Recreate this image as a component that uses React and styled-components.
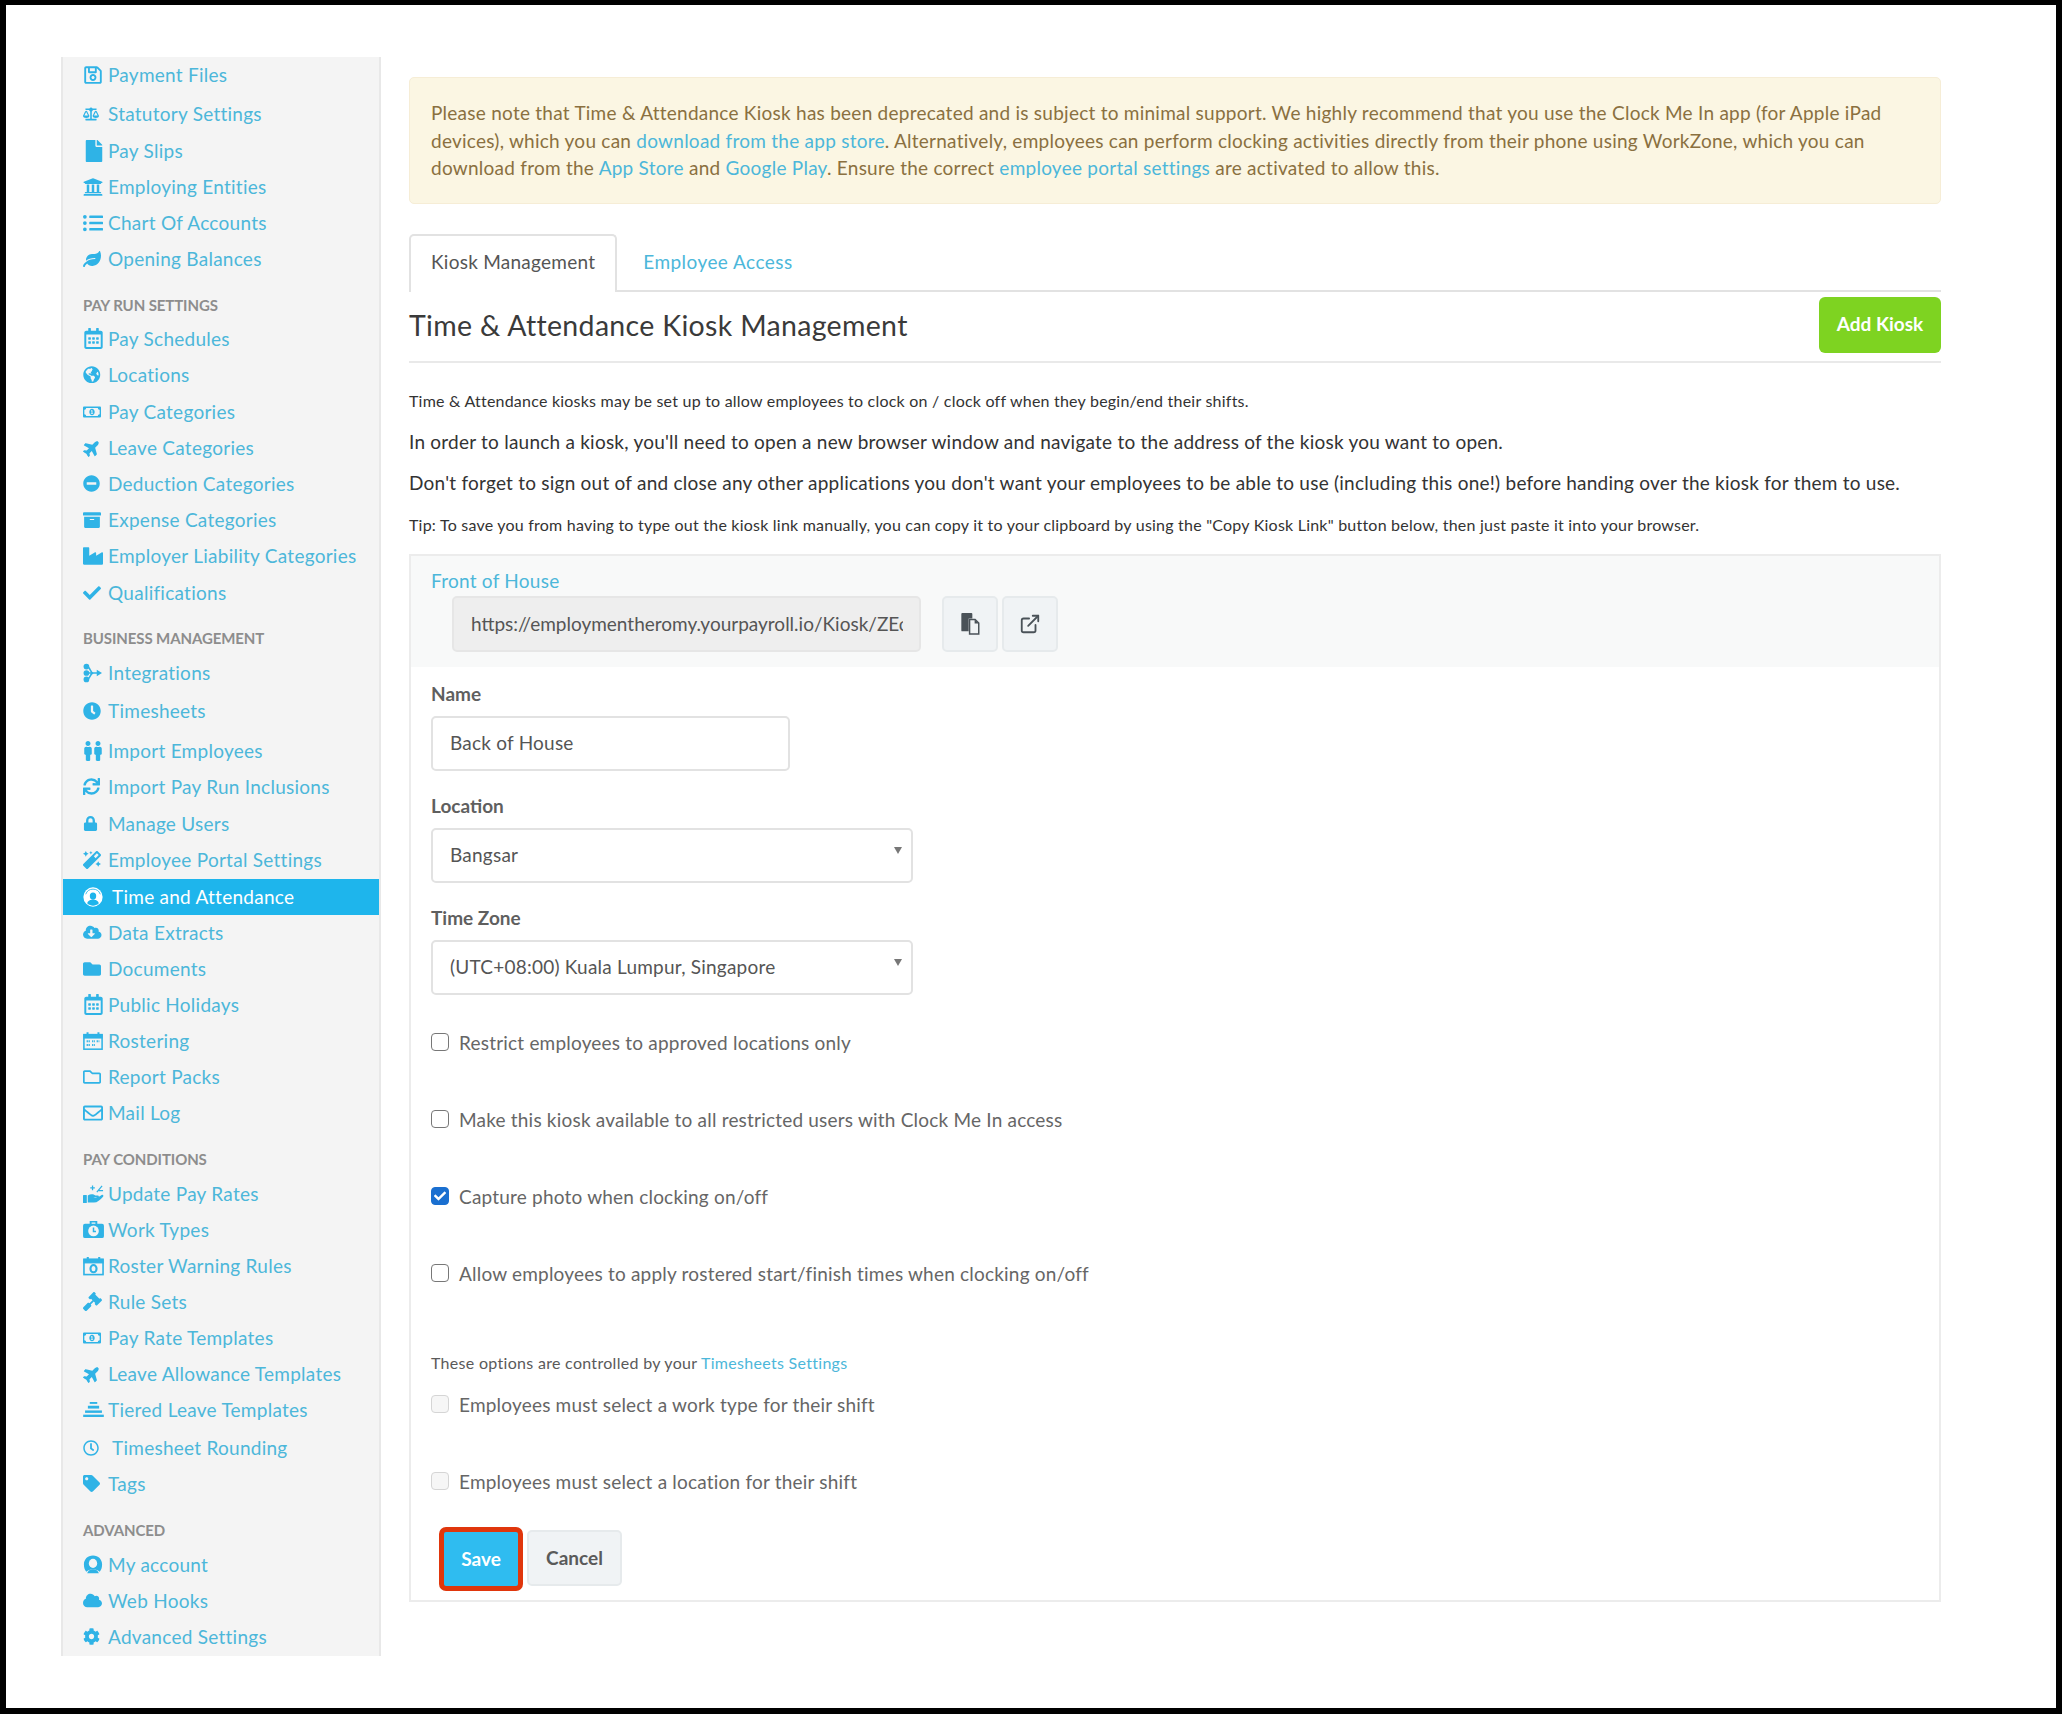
import React from "react";
import styled, { createGlobalStyle } from "styled-components";
import {
  FaRegSave, FaBalanceScale, FaFile, FaUniversity, FaListUl, FaLeaf, FaRegCalendarAlt,
  FaGlobeAmericas, FaRegMoneyBillAlt, FaPlane, FaMinusCircle, FaArchive, FaIndustry, FaCheck,
  FaClock, FaRegClock, FaSync, FaLock, FaMagic, FaCloudDownloadAlt, FaFolder,
  FaRegFolder, FaRegEnvelope, FaGavel, FaTag, FaCloud, FaCog, FaMale,
} from "react-icons/fa";
import { ExternalLink } from "lucide-react";

const blue = "#4cb7da";

const GlobalStyle = createGlobalStyle`
  html, body { margin: 0; padding: 0; background: #000; }
  body { font-family: "Lato", "Open Sans", sans-serif; }
  * { box-sizing: border-box; }
`;

function IntegrationIcon() {
  return (
    <svg viewBox="0 0 20 20" width="19" height="20" fill="currentColor">
      <circle cx="3.6" cy="3.2" r="3" />
      <circle cx="3.6" cy="10" r="3" />
      <circle cx="3.6" cy="16.8" r="3" />
      <path d="M4 3.2 C8 3.2 7 10 11 10 C7 10 8 16.8 4 16.8 M4 10 H15" stroke="currentColor" strokeWidth="1.7" fill="none" />
      <path d="M14.5 6.6 L20 10 L14.5 13.4 Z" />
    </svg>
  );
}

function HandSparkIcon() {
  return (
    <svg viewBox="0 0 22 20" width="21" height="20" fill="currentColor">
      <rect x="0" y="11" width="4" height="8.4" rx="0.6" />
      <path d="M5 11.5 C8 9.5 11 10 13 11.5 H15.5 C17 11.5 17 13.5 15.5 13.5 H11 C13 14.5 16 13.5 19.5 11 C21 10.2 22 11.8 21 12.8 C18 16 15 19 11.5 19 H5 Z" />
      <path d="M10 6 V1 M7.6 3.5 H12.4 M14.5 8 L20 1.5 M16.5 6.5 H21" stroke="currentColor" strokeWidth="1.3" fill="none" />
    </svg>
  );
}

function BriefClockIcon() {
  return (
    <svg viewBox="0 0 22 20" width="21" height="19">
      <path fill="currentColor" d="M7 1 H15 V4 H20 A2 2 0 0 1 22 6 V17 A2 2 0 0 1 20 19 H2 A2 2 0 0 1 0 17 V6 A2 2 0 0 1 2 4 H7 Z M9 2.6 V4 H13 V2.6 Z" fillRule="evenodd" />
      <circle cx="11" cy="11.5" r="5.6" fill="#f4f4f4" />
      <path d="M11 8 V12 H13.6" stroke="currentColor" strokeWidth="1.6" fill="none" />
    </svg>
  );
}

function RosterWarnIcon() {
  return (
    <svg viewBox="0 0 22 20" width="21" height="20" fill="none" stroke="currentColor">
      <rect x="1" y="3" width="20" height="16" strokeWidth="1.7" />
      <rect x="1" y="3" width="20" height="3.8" fill="currentColor" />
      <path d="M5 0.5 V4 M17 0.5 V4" strokeWidth="2.2" />
      <ellipse cx="11" cy="12.8" rx="3.2" ry="3.8" strokeWidth="2.2" />
    </svg>
  );
}

function RosterIcon() {
  return (
    <svg viewBox="0 0 22 20" width="20" height="20" fill="none" stroke="currentColor">
      <rect x="1" y="3" width="20" height="16" strokeWidth="1.7" />
      <rect x="1" y="3" width="20" height="3.8" fill="currentColor" />
      <path d="M5 0.5 V4 M17 0.5 V4" strokeWidth="2.2" />
      <path d="M4 10.4 H8 M10 10.4 H13 M15 10.4 H18 M4 14.4 H8 M10 14.4 H13" strokeWidth="2.2" strokeDasharray="1.4 0.7" />
    </svg>
  );
}

function TierIcon() {
  return (
    <svg viewBox="0 0 22 16" width="21" height="15" fill="currentColor">
      <rect x="7" y="0" width="8" height="2" />
      <rect x="5" y="4" width="12" height="3" />
      <rect x="2" y="9" width="18" height="2.6" />
      <rect x="0" y="13.5" width="22" height="2.5" />
    </svg>
  );
}

function AccountIcon() {
  return (
    <svg viewBox="0 0 22 20" width="20" height="19">
      <path fill="currentColor" d="M11 0.2 C17 0.2 21 4.5 21 10 C21 13.5 20 16 18.4 18 C16.5 15.8 14 15.4 11 15.4 C8 15.4 5.5 15.8 3.6 18 C2 16 1 13.5 1 10 C1 4.5 5 0.2 11 0.2 Z" />
      <ellipse cx="11" cy="8.8" rx="4.6" ry="5" fill="#f4f4f4" />
      <path fill="currentColor" d="M4.6 19.6 C5.4 16.6 8 15.2 11 15.2 C14 15.2 16.6 16.6 17.4 19.6 Z" />
    </svg>
  );
}

function AttendanceIcon() {
  return (
    <svg viewBox="0 0 22 22" width="20" height="20">
      <circle cx="11" cy="11" r="10.6" fill="#fff" />
      <path d="M3 8 A8.5 8.5 0 0 1 19 8" stroke="#1eb5ec" strokeWidth="0.9" fill="none" />
      <ellipse cx="11" cy="10" rx="3.5" ry="4" fill="#1eb5ec" />
      <path d="M4.6 18 C5.5 14.6 8 14 11 14 C14 14 16.5 14.6 17.4 18 C15.5 20 13 20.6 11 20.6 C9 20.6 6.5 20 4.6 18 Z" fill="#1eb5ec" />
    </svg>
  );
}

function PasteIcon() {
  return (
    <svg viewBox="0 0 20 24" width="19" height="22">
      <path fill="#4a5258" d="M1 0 H11 A1 1 0 0 1 12 1 V6 H8 V20 H1 A1 1 0 0 1 0 19 V1 A1 1 0 0 1 1 0 Z" />
      <path fill="#f0f3f5" stroke="#4a5258" strokeWidth="1.6" d="M9 7 H15 L19 11 V23 H9 Z" />
      <path fill="#4a5258" d="M14.5 7 V11.5 H19 Z" />
    </svg>
  );
}

function PeopleIcon() {
  return (
    <Pair>
      <FaMale />
      <FaMale />
    </Pair>
  );
}

const Pair = styled.span`
  display: inline-flex;
  & > svg { width: 10px; height: 20px; }
`;

const Plane = styled(FaPlane)`
  transform: rotate(-45deg);
`;

const Frame = styled.div`
  width: 2062px;
  height: 1714px;
  border-style: solid;
  border-color: #000;
  border-width: 5px 6px 6px 6px;
  background: #fff;
  display: flex;
  align-items: flex-start;
  padding: 52px 0 0 55px;
  overflow: hidden;
`;

const Sidebar = styled.nav`
  width: 320px;
  height: 1599px;
  flex: none;
  background: #f4f4f4;
  border-left: 2px solid #e8e8e8;
  border-right: 2px solid #e8e8e8;
`;

const Row = styled.a`
  display: flex;
  align-items: center;
  height: 36px;
  margin-top: ${(p) => p.$gap || 0}px;
  padding-left: 20px;
  padding-bottom: 1px;
  color: ${(p) => (p.$active ? "#fff" : blue)};
  background: ${(p) => (p.$active ? "#1eb5ec" : "transparent")};
  font-size: 19px;
  letter-spacing: 0.26px;
`;

const IconSlot = styled.span`
  width: ${(p) => (p.$wide ? 29 : 25)}px;
  flex: none;
  display: inline-flex;
  align-items: center;
  color: ${(p) => (p.$active ? "#fff" : "#2fb3e6")};
  font-size: ${(p) => p.$size || 18}px;
`;

const SectionHead = styled.div`
  height: 26px;
  margin-top: ${(p) => p.$gap || 0}px;
  padding-left: 20px;
  display: flex;
  align-items: center;
  color: #8d8d8d;
  font-size: 15px;
  font-weight: 700;
  letter-spacing: -0.1px;
`;

const nav = [
  { t: "Payment Files", i: <FaRegSave />, s: 20 },
  { t: "Statutory Settings", i: <FaBalanceScale />, g: 3, s: 16 },
  { t: "Pay Slips", i: <FaFile />, g: 1, s: 22 },
  { t: "Employing Entities", i: <FaUniversity />, s: 20 },
  { t: "Chart Of Accounts", i: <FaListUl />, s: 20 },
  { t: "Opening Balances", i: <FaLeaf />, s: 18 },
  { h: "PAY RUN SETTINGS", g: 15 },
  { t: "Pay Schedules", i: <FaRegCalendarAlt />, g: 3, s: 21 },
  { t: "Locations", i: <FaGlobeAmericas />, s: 17.5 },
  { t: "Pay Categories", i: <FaRegMoneyBillAlt />, g: 1, s: 18 },
  { t: "Leave Categories", i: <Plane />, s: 18 },
  { t: "Deduction Categories", i: <FaMinusCircle />, s: 17 },
  { t: "Expense Categories", i: <FaArchive />, s: 18 },
  { t: "Employer Liability Categories", i: <FaIndustry />, s: 20 },
  { t: "Qualifications", i: <FaCheck />, g: 1, s: 18 },
  { h: "BUSINESS MANAGEMENT", g: 14 },
  { t: "Integrations", i: <IntegrationIcon />, g: 4 },
  { t: "Timesheets", i: <FaClock />, g: 2, s: 18 },
  { t: "Import Employees", i: <PeopleIcon />, g: 4 },
  { t: "Import Pay Run Inclusions", i: <FaSync />, s: 17 },
  { t: "Manage Users", i: <FaLock />, g: 1, s: 15 },
  { t: "Employee Portal Settings", i: <FaMagic />, s: 18 },
  { t: "Time and Attendance", i: <AttendanceIcon />, a: true, g: 1 },
  { t: "Data Extracts", i: <FaCloudDownloadAlt />, s: 18.5 },
  { t: "Documents", i: <FaFolder />, s: 18 },
  { t: "Public Holidays", i: <FaRegCalendarAlt />, s: 21 },
  { t: "Rostering", i: <RosterIcon /> },
  { t: "Report Packs", i: <FaRegFolder />, s: 18 },
  { t: "Mail Log", i: <FaRegEnvelope />, s: 20 },
  { h: "PAY CONDITIONS", g: 15 },
  { t: "Update Pay Rates", i: <HandSparkIcon />, g: 4 },
  { t: "Work Types", i: <BriefClockIcon /> },
  { t: "Roster Warning Rules", i: <RosterWarnIcon /> },
  { t: "Rule Sets", i: <FaGavel />, s: 19 },
  { t: "Pay Rate Templates", i: <FaRegMoneyBillAlt />, s: 18 },
  { t: "Leave Allowance Templates", i: <Plane />, s: 18 },
  { t: "Tiered Leave Templates", i: <TierIcon /> },
  { t: "Timesheet Rounding", i: <FaRegClock />, a2: true, g: 2, s: 16 },
  { t: "Tags", i: <FaTag />, s: 17 },
  { h: "ADVANCED", g: 15 },
  { t: "My account", i: <AccountIcon />, g: 4 },
  { t: "Web Hooks", i: <FaCloud />, s: 19 },
  { t: "Advanced Settings", i: <FaCog />, s: 17 },
];

const Main = styled.main`
  margin-left: 28px;
  width: 1532px;
  flex: none;
  padding-top: 20px;
  color: #333;
`;

const Alert = styled.div`
  height: 127px;
  padding: 21px 21px;
  background: #fbf6e3;
  border: 1px solid #f6edd6;
  border-radius: 5px;
  color: #8a7040;
  font-size: 19px;
  line-height: 27.6px;
  letter-spacing: 0.25px;
`;

const Link = styled.a`
  color: ${blue};
`;

const Tabs = styled.div`
  display: flex;
  margin-top: 30px;
  height: 58px;
  border-bottom: 2px solid #e2e2e2;
`;

const Tab = styled.div`
  height: 58px;
  padding: 0 20px 5px ${(p) => (p.$active ? 20 : 24)}px;
  display: flex;
  align-items: center;
  font-size: 19px;
  letter-spacing: ${(p) => (p.$active ? 0.25 : 0.45)}px;
  color: ${(p) => (p.$active ? "#555" : blue)};
  background: ${(p) => (p.$active ? "#fff" : "transparent")};
  border: ${(p) => (p.$active ? "2px solid #e2e2e2" : "2px solid transparent")};
  border-bottom: none;
  border-radius: 5px 5px 0 0;
`;

const TitleBar = styled.div`
  height: 71px;
  padding-top: 5px;
  display: flex;
  align-items: flex-start;
  justify-content: space-between;
  border-bottom: 2px solid #e9e9e9;
`;

const Title = styled.h1`
  margin: 0;
  font-size: 28.5px;
  line-height: 56px;
  font-weight: 400;
  color: #3a3a3a;
  letter-spacing: 0.32px;
`;

const AddButton = styled.button`
  width: 122px;
  height: 56px;
  padding: 0 0 3px;
  border: none;
  border-radius: 6px;
  background: #7ed321;
  color: #fff;
  font: 700 19px "Lato", sans-serif;
`;

const Small = styled.p`
  margin: ${(p) => p.$top}px 0 0;
  font-size: 16px;
  line-height: 22px;
  color: #333;
  letter-spacing: 0.22px;
`;

const Para = styled.p`
  margin: ${(p) => p.$top}px 0 0;
  font-size: 19px;
  line-height: 26px;
  color: #333;
  letter-spacing: 0.23px;
`;

const Panel = styled.section`
  margin-top: 18px;
  height: 1048px;
  border: 2px solid #ececec;
`;

const PanelHead = styled.div`
  height: 111px;
  padding: 12px 20px 0;
  background: #f8f9f9;
`;

const HeadLink = styled(Link)`
  display: block;
  height: 28px;
  font-size: 19px;
  line-height: 25px;
  letter-spacing: 0.25px;
`;

const UrlRow = styled.div`
  display: flex;
  margin-left: 21px;
  gap: 5px;
`;

const Url = styled.div`
  width: 469px;
  height: 56px;
  margin-right: 16px;
  padding: 0 16px 2px 17px;
  display: flex;
  align-items: center;
  background: #eee;
  border: 2px solid #e6e6e6;
  border-radius: 5px;
  color: #555;
  font-size: 19px;
  letter-spacing: 0;
`;

const UrlText = styled.span`
  display: block;
  overflow: hidden;
  white-space: nowrap;
`;

const IconButton = styled.button`
  width: 56px;
  height: 56px;
  margin-right: -1px;
  padding: 0;
  display: flex;
  align-items: center;
  justify-content: center;
  background: #f0f3f5;
  border: 2px solid #e6eaec;
  border-radius: 5px;
  color: #4a5258;
`;

const PanelBody = styled.div`
  padding: 0 20px;
`;

const Label = styled.label`
  display: block;
  height: 25px;
  margin-top: ${(p) => p.$top}px;
  font-size: 19px;
  line-height: 25px;
  font-weight: 700;
  color: #5f5f5f;
`;

const Control = styled.div`
  position: relative;
  width: ${(p) => p.$w}px;
  height: 55px;
  margin-top: 10px;
  padding: 0 17px 2px;
  display: flex;
  align-items: center;
  background: #fff;
  border: 2px solid #e2e2e2;
  border-radius: 5px;
  color: #555;
  font-size: 19px;
  letter-spacing: 0.22px;
`;

const Caret = styled.span`
  position: absolute;
  right: 9px;
  top: 17px;
  border-left: 4px solid transparent;
  border-right: 4px solid transparent;
  border-top: 7px solid #777;
`;

const CheckRow = styled.div`
  display: flex;
  align-items: center;
  height: 26px;
  margin-top: ${(p) => p.$top}px;
  gap: 10px;
  font-size: 19px;
  letter-spacing: 0.2px;
  color: #666;
`;

const Box = styled.span`
  width: 18px;
  height: 18px;
  flex: none;
  display: inline-flex;
  align-items: center;
  justify-content: center;
  border-radius: 4px;
  border: 1.5px solid ${(p) => (p.$checked ? "#1a6fd0" : p.$disabled ? "#d5d5d5" : "#777")};
  background: ${(p) => (p.$checked ? "#1a6fd0" : p.$disabled ? "#f6f6f6" : "#fff")};
  color: #fff;
  font-size: 12px;
`;

const Note = styled.div`
  margin-top: 66px;
  height: 22px;
  font-size: 16px;
  line-height: 22px;
  letter-spacing: 0.3px;
  color: #5a5a5a;
`;

const Actions = styled.div`
  display: flex;
  align-items: flex-start;
  gap: 4px;
  margin: 33px 0 0 8px;
`;

const SaveButton = styled.button`
  width: 84px;
  height: 64px;
  padding: 0 0 2px;
  border: 5px solid #e0360c;
  border-radius: 7px;
  background: #2fbcf0;
  color: #fff;
  font: 700 19px "Lato", sans-serif;
`;

const CancelButton = styled.button`
  width: 95px;
  height: 56px;
  margin-top: 3px;
  padding: 0 0 2px;
  border: 2px solid #e6eaec;
  border-radius: 5px;
  background: #f0f3f5;
  color: #5a5a5a;
  font: 700 19px "Lato", sans-serif;
`;

function Check({ children, checked, disabled, top }) {
  return (
    <CheckRow $top={top}>
      <Box $checked={checked} $disabled={disabled}>{checked && <FaCheck />}</Box>
      {children}
    </CheckRow>
  );
}

export default function App() {
  return (
    <Frame>
      <GlobalStyle />
      <Sidebar>
        {nav.map((n) =>
          n.h ? (
            <SectionHead key={n.h} $gap={n.g}>{n.h}</SectionHead>
          ) : (
            <Row key={n.t} $gap={n.g} $active={n.a}>
              <IconSlot $wide={n.a || n.a2} $active={n.a} $size={n.s}>{n.i}</IconSlot>
              {n.t}
            </Row>
          )
        )}
      </Sidebar>
      <Main>
        <Alert>
          Please note that Time &amp; Attendance Kiosk has been deprecated and is subject to minimal support. We highly recommend that you use the Clock Me In app (for Apple iPad devices), which you can <Link>download from the app store</Link>. Alternatively, employees can perform clocking activities directly from their phone using WorkZone, which you can download from the <Link>App Store</Link> and <Link>Google Play</Link>. Ensure the correct <Link>employee portal settings</Link> are activated to allow this.
        </Alert>
        <Tabs>
          <Tab $active>Kiosk Management</Tab>
          <Tab>Employee Access</Tab>
        </Tabs>
        <TitleBar>
          <Title>Time &amp; Attendance Kiosk Management</Title>
          <AddButton>Add Kiosk</AddButton>
        </TitleBar>
        <Small $top={27}>Time &amp; Attendance kiosks may be set up to allow employees to clock on / clock off when they begin/end their shifts.</Small>
        <Para $top={17}>In order to launch a kiosk, you'll need to open a new browser window and navigate to the address of the kiosk you want to open.</Para>
        <Para $top={15}>Don't forget to sign out of and close any other applications you don't want your employees to be able to use (including this one!) before handing over the kiosk for them to use.</Para>
        <Small $top={18}>Tip: To save you from having to type out the kiosk link manually, you can copy it to your clipboard by using the "Copy Kiosk Link" button below, then just paste it into your browser.</Small>
        <Panel>
          <PanelHead>
            <HeadLink>Front of House</HeadLink>
            <UrlRow>
              <Url><UrlText>https://employmentheromy.yourpayroll.io/Kiosk/ZEcQ2xR7</UrlText></Url>
              <IconButton><PasteIcon /></IconButton>
              <IconButton><ExternalLink size={22} strokeWidth={2} /></IconButton>
            </UrlRow>
          </PanelHead>
          <PanelBody>
            <Label $top={14}>Name</Label>
            <Control $w={359}>Back of House</Control>
            <Label $top={22}>Location</Label>
            <Control $w={482}>Bangsar<Caret /></Control>
            <Label $top={22}>Time Zone</Label>
            <Control $w={482}>(UTC+08:00) Kuala Lumpur, Singapore<Caret /></Control>
            <Check top={34}>Restrict employees to approved locations only</Check>
            <Check top={51}>Make this kiosk available to all restricted users with Clock Me In access</Check>
            <Check top={51} checked>Capture photo when clocking on/off</Check>
            <Check top={51}>Allow employees to apply rostered start/finish times when clocking on/off</Check>
            <Note>These options are controlled by your <Link>Timesheets Settings</Link></Note>
            <Check top={17} disabled>Employees must select a work type for their shift</Check>
            <Check top={51} disabled>Employees must select a location for their shift</Check>
            <Actions>
              <SaveButton>Save</SaveButton>
              <CancelButton>Cancel</CancelButton>
            </Actions>
          </PanelBody>
        </Panel>
      </Main>
    </Frame>
  );
}
